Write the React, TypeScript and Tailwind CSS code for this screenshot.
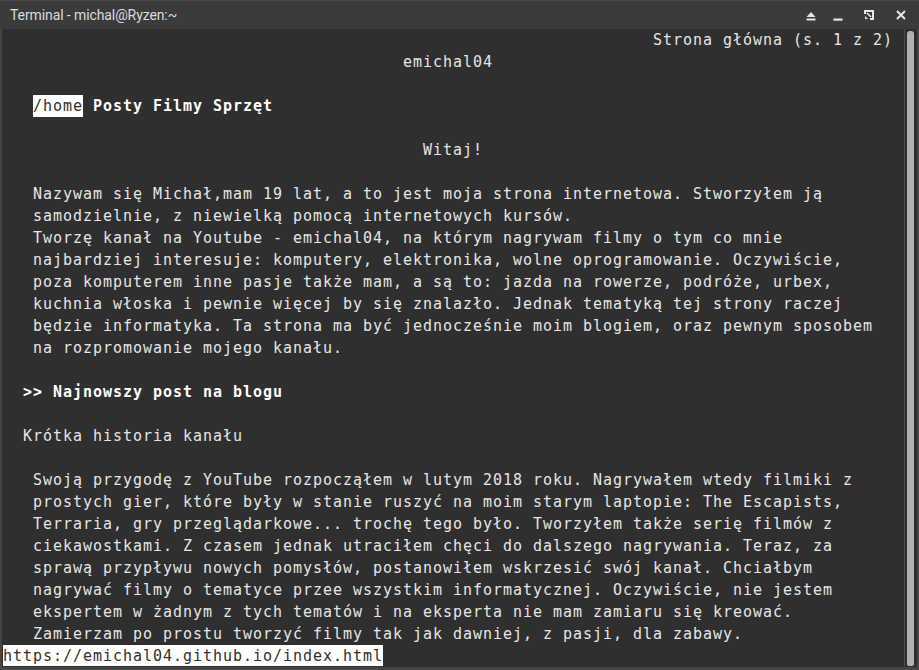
import React from "react"

const mono = "font-['DejaVu_Sans_Mono',monospace] text-[15px] tracking-[0.97px]"

const intro = [
  "Nazywam się Michał,mam 19 lat, a to jest moja strona internetowa. Stworzyłem ją",
  "samodzielnie, z niewielką pomocą internetowych kursów.",
  "Tworzę kanał na Youtube - emichal04, na którym nagrywam filmy o tym co mnie",
  "najbardziej interesuje: komputery, elektronika, wolne oprogramowanie. Oczywiście,",
  "poza komputerem inne pasje także mam, a są to: jazda na rowerze, podróże, urbex,",
  "kuchnia włoska i pewnie więcej by się znalazło. Jednak tematyką tej strony raczej",
  "będzie informatyka. Ta strona ma być jednocześnie moim blogiem, oraz pewnym sposobem",
  "na rozpromowanie mojego kanału.",
]

const history = [
  "Swoją przygodę z YouTube rozpocząłem w lutym 2018 roku. Nagrywałem wtedy filmiki z",
  "prostych gier, które były w stanie ruszyć na moim starym laptopie: The Escapists,",
  "Terraria, gry przeglądarkowe... trochę tego było. Tworzyłem także serię filmów z",
  "ciekawostkami. Z czasem jednak utraciłem chęci do dalszego nagrywania. Teraz, za",
  "sprawą przypływu nowych pomysłów, postanowiłem wskrzesić swój kanał. Chciałbym",
  "nagrywać filmy o tematyce przee wszystkim informatycznej. Oczywiście, nie jestem",
  "ekspertem w żadnym z tych tematów i na eksperta nie mam zamiaru się kreować.",
  "Zamierzam po prostu tworzyć filmy tak jak dawniej, z pasji, dla zabawy.",
]

function Row({ children }: { children?: React.ReactNode }) {
  return <div className="h-[22px] leading-[22px] whitespace-pre">{children}</div>
}

function TitleButtons() {
  return (
    <div className="flex items-center pr-[12px] text-[#e6e6e6]">
      {/* keep above */}
      <svg width="12" height="12" viewBox="0 0 12 12" className="mt-[1px]">
        <path d="M1.5 7 L6 2 L10.5 7 Z" fill="currentColor" />
        <rect x="1.5" y="8.5" width="9" height="2" fill="currentColor" />
      </svg>
      {/* minimize */}
      <svg width="12" height="12" viewBox="0 0 12 12" className="ml-[15px] mt-[1px]">
        <rect x="1.5" y="8.5" width="9" height="2.2" fill="currentColor" />
      </svg>
      {/* maximize */}
      <svg width="12" height="12" viewBox="0 0 12 12" className="ml-[19px]">
        <path d="M2 5 V2 H10 V10 H7" fill="none" stroke="currentColor" strokeWidth="2" />
        <path d="M2 7 V10 H5 Z" fill="currentColor" />
        <path d="M4 4 L8 8" stroke="currentColor" strokeWidth="1.6" />
      </svg>
      {/* close */}
      <svg width="12" height="12" viewBox="0 0 12 12" className="ml-[20px]">
        <path d="M2 2 L10 10 M10 2 L2 10" stroke="currentColor" strokeWidth="2" />
      </svg>
    </div>
  )
}

export default function App() {
  return (
    <div className="w-[919px] h-[670px] bg-[#3b3b3b] flex flex-col overflow-hidden">
      {/* Title bar */}
      <div className="h-[29px] shrink-0 flex items-center justify-between bg-[#3b3b3b] border-t border-[#4a4a4a]">
        <div className="pl-[10px] font-['Roboto',sans-serif] text-[14px] tracking-[-0.1px] text-[#dcdcdc]">
          Terminal - michal@Ryzen:~
        </div>
        <TitleButtons />
      </div>

      {/* Body */}
      <div className="flex-1 flex min-h-0 border-l-2 border-r-2 border-b-[3px] border-[#454545] bg-[#2f2f2f]">
        <div className={`flex-1 pl-[1px] text-[#e6e6e6] ${mono}`}>
          <Row>{" ".repeat(65)}Strona główna (s. 1 z 2)</Row>
          <Row>{" ".repeat(40)}emichal04</Row>
          <Row />
          <Row>
            {"   "}
            <span className="inline-block h-[22px] bg-white text-[#2f2f2f]">/home</span>
            <span className="font-bold text-white"> Posty Filmy Sprzęt</span>
          </Row>
          <Row />
          <Row>{" ".repeat(42)}Witaj!</Row>
          <Row />
          {intro.map((l) => (
            <Row key={l}>{"   " + l}</Row>
          ))}
          <Row />
          <Row>
            {"  "}
            <span className="font-bold text-white">&gt;&gt; Najnowszy post na blogu</span>
          </Row>
          <Row />
          <Row>{"  "}Krótka historia kanału</Row>
          <Row />
          {history.map((l) => (
            <Row key={l}>{"   " + l}</Row>
          ))}
          <Row>
            <span className="inline-block h-[21px] bg-white text-[#2f2f2f]">https://emichal04.github.io/index.html</span>
          </Row>
        </div>

        {/* Scrollbar */}
        <div className="w-[13px] shrink-0 border-l border-[#4a4a4a] pt-[2px] pb-[1px] pl-[2px] pr-[4px]">
          <div className="h-full w-[7px] rounded-t-[3px] rounded-b-[2px] bg-[#b1b1b1]" />
        </div>
      </div>
    </div>
  )
}
